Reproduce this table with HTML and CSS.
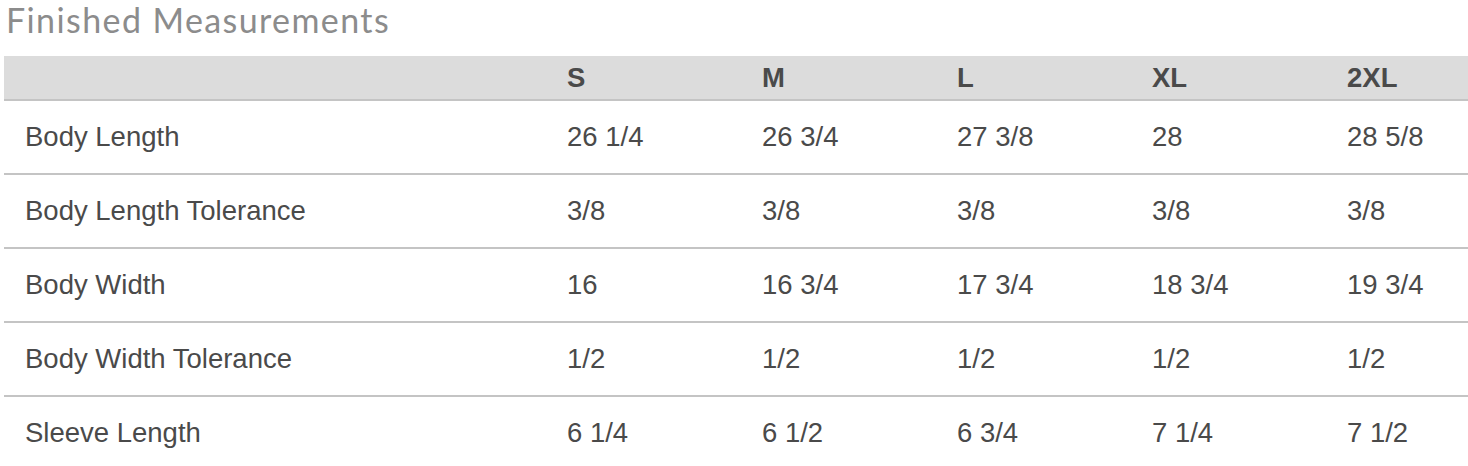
FILE: index.html
```html
<!DOCTYPE html>
<html>
<head>
<meta charset="utf-8">
<link rel="stylesheet" href="styles.css">
</head>
<body>
<div class="page">
  <h2 class="title">Finished Measurements</h2>
  <table class="size-table">
    <colgroup>
      <col class="c-label">
      <col class="c-size"><col class="c-size"><col class="c-size"><col class="c-size"><col class="c-last">
    </colgroup>
    <thead>
      <tr><th></th><th>S</th><th>M</th><th>L</th><th>XL</th><th>2XL</th></tr>
    </thead>
    <tbody>
      <tr><td>Body Length</td><td>26 1/4</td><td>26 3/4</td><td>27 3/8</td><td>28</td><td>28 5/8</td></tr>
      <tr><td>Body Length Tolerance</td><td>3/8</td><td>3/8</td><td>3/8</td><td>3/8</td><td>3/8</td></tr>
      <tr><td>Body Width</td><td>16</td><td>16 3/4</td><td>17 3/4</td><td>18 3/4</td><td>19 3/4</td></tr>
      <tr><td>Body Width Tolerance</td><td>1/2</td><td>1/2</td><td>1/2</td><td>1/2</td><td>1/2</td></tr>
      <tr><td>Sleeve Length</td><td>6 1/4</td><td>6 1/2</td><td>6 3/4</td><td>7 1/4</td><td>7 1/2</td></tr>
    </tbody>
  </table>
</div>
</body>
</html>
```
FILE: styles.css
```css
html, body {
  margin: 0;
  padding: 0;
  background: #ffffff;
  overflow: hidden;
}
.page {
  padding: 0 0 0 4px;
}
.title {
  margin: 0;
  padding: 0 0 0 2px;
  height: 56px;
  font-family: Lato, "Open Sans", sans-serif;
  font-weight: 400;
  font-size: 34px;
  letter-spacing: 1.4px;
  line-height: 40px;
  color: #8c8c8c;
  white-space: nowrap;
}
.size-table {
  border-collapse: collapse;
  table-layout: fixed;
  width: 1464px;
  font-family: "Liberation Sans", Arial, sans-serif;
  font-size: 27.5px;
  color: #4a4a4a;
}
.c-label { width: 542px; }
.c-size { width: 195px; }
.c-last { width: 142px; }
.size-table th {
  background: #dcdcdc;
  height: 42px;
  padding: 0 0 0 21px;
  text-align: left;
  font-weight: 700;
  border-bottom: 2px solid #c4c4c4;
  box-sizing: border-box;
  white-space: nowrap;
}
.size-table thead tr { height: 44px; }
.size-table td {
  height: 72px;
  padding: 0 0 0 21px;
  text-align: left;
  vertical-align: middle;
  border-bottom: 2px solid #c4c4c4;
  white-space: nowrap;
}
.size-table tbody tr:last-child td { border-bottom: none; }
```
